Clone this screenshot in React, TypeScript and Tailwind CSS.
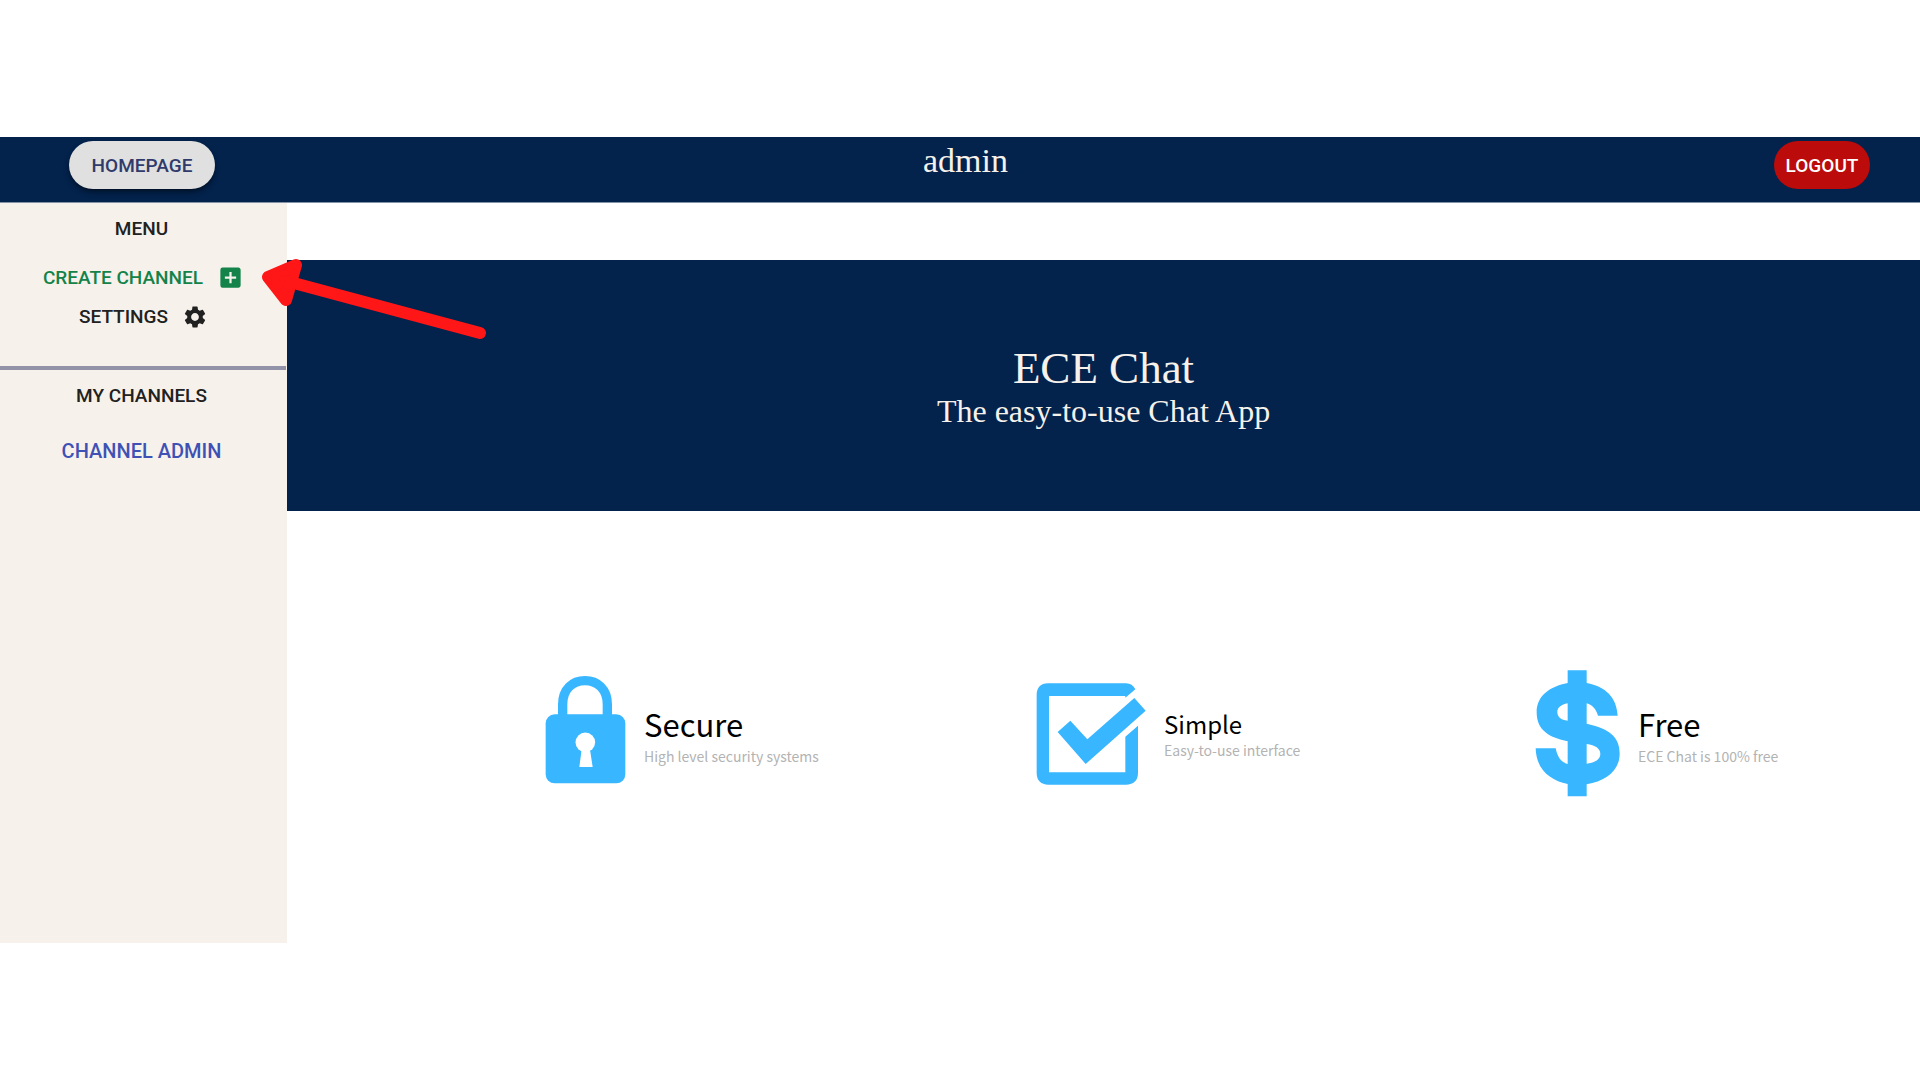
import type { ReactNode } from "react";
import { MdAddBox, MdSettings } from "react-icons/md";

const accent = "#38b6ff";

function LockIcon() {
  return (
    <svg viewBox="75 45 243 348" className="h-[116px] w-[81px] shrink-0" aria-hidden="true">
      <path d="M128 165V130C128 84 158 59 195 59S262 84 262 130V165" fill="none" stroke={accent} strokeWidth="28" />
      <rect x="77" y="160" width="239" height="207" rx="27" fill={accent} />
      <circle cx="196" cy="244" r="29.5" fill="#fff" />
      <path d="M185 262H208L211 272L218 318H178L184 272Z" fill="#fff" />
    </svg>
  );
}

function CheckIcon() {
  return (
    <svg viewBox="48 66 330 306" className="h-[102px] w-[110px] shrink-0" aria-hidden="true">
      <path
        d="M346 85C340 73 331 67 318 67H84C62 67 50 80 50 102V336C50 358 63 371 85 371H318C341 371 354 358 354 336V194L316 227V334H87V105H316V110Z"
        fill={accent}
      />
      <path d="M113 213L151 179L202 235L343 111L377 149L197 309Z" fill={accent} />
    </svg>
  );
}

function DollarIcon() {
  return (
    <svg viewBox="46 34 255 381" className="h-[127px] w-[85px] shrink-0" aria-hidden="true">
      <path
        fillRule="evenodd"
        fill={accent}
        d="M144 35H201V73C258 84 291 116 294 171H235C229 152 219 139 201 134V195C266 210 300 232 300 285C300 336 258 367 201 377V413H144V376C91 365 50 333 48 269H108C113 295 124 311 144 316V248C91 237 51 217 51 161C51 111 91 83 144 73ZM144 134C124 138 113 147 113 160C113 175 124 184 144 186ZM201 256V315C227 312 242 301 242 285C242 270 227 259 201 256Z"
      />
    </svg>
  );
}

function Feature({ icon, title, text, small = false }: { icon: ReactNode; title: string; text: string; small?: boolean }) {
  return (
    <article className="flex items-center gap-[18px] whitespace-nowrap font-['Noto_Sans_CJK_SC','Noto_Sans',sans-serif]">
      {icon}
      {small ? (
        <div className="pt-1">
          <h3 className="text-[24px] leading-7 text-black">{title}</h3>
          <p className="text-[14px] leading-6 text-[#b3b3b3]">{text}</p>
        </div>
      ) : (
        <div className="pt-2">
          <h3 className="text-[31px] leading-9 text-black">{title}</h3>
          <p className="text-[14px] leading-7 text-[#b3b3b3]">{text}</p>
        </div>
      )}
    </article>
  );
}

export default function App() {
  return (
    <div className="min-h-screen bg-white py-[137px] font-[Roboto,sans-serif] text-[#212121]">
      <header className="grid h-[66px] grid-cols-[287px_1fr_auto] items-start border-b border-[#8492a8] bg-[#03224c] pr-[50px] pt-1">
        <button className="ml-[69px] h-12 w-[146px] rounded-full bg-[#e0e0e0] pt-0.5 text-[19px] font-medium text-[#303b6b] shadow-md shadow-black/40">
          HOMEPAGE
        </button>
        <p className="pr-[130px] text-center font-['Liberation_Serif',serif] text-[34px] leading-10 text-[#f6f1eb]">admin</p>
        <button className="h-12 w-24 rounded-full bg-[#bb0b0b] pt-0.5 text-[19px] font-medium text-white">LOGOUT</button>
      </header>

      <div className="relative flex min-h-[740px]">
        <aside className="w-[287px] shrink-0 bg-[#f6f1eb] text-[19px] font-medium leading-6">
          <nav className="flex flex-col items-center pr-1 pt-[14px]">
            <h2>MENU</h2>
            <a href="#create" className="mt-[23px] flex items-center gap-[14px] pl-1 text-[#13834a]">
              CREATE CHANNEL
              <MdAddBox size={27} aria-hidden="true" />
            </a>
            <a href="#settings" className="mt-[13px] flex items-center gap-[14px] pl-1 text-[#212121]">
              SETTINGS
              <MdSettings size={26} aria-hidden="true" />
            </a>
          </nav>
          <hr className="mr-px mt-9 border-t-4 border-[#9292a8]" />
          <nav className="flex flex-col items-center pr-1 pt-[14px]">
            <h2>MY CHANNELS</h2>
            <a href="#admin" className="mt-[31px] text-[20px] text-[#3f51b5]">
              CHANNEL ADMIN
            </a>
          </nav>
        </aside>

        <main className="flex min-w-0 grow flex-col pt-[57px] font-['Liberation_Serif',serif]">
          <section className="flex h-[251px] flex-col items-center justify-center bg-[#03224c] text-[#f6f1eb]">
            <h1 className="text-[45px] leading-[50px]">ECE Chat</h1>
            <p className="text-[32px] leading-9">The easy-to-use Chat App</p>
          </section>
          <section className="grid grow grid-cols-[491fr_499fr_246fr] items-center pl-[258px] pr-[139px] pt-[13px]">
            <Feature icon={<LockIcon />} title="Secure" text="High level security systems" />
            <Feature icon={<CheckIcon />} title="Simple" text="Easy-to-use interface" small />
            <Feature icon={<DollarIcon />} title="Free" text="ECE Chat is 100% free" />
          </section>
        </main>

        <svg viewBox="261 258 225 82" className="absolute left-[261px] top-[55px] h-[82px] w-[225px]" aria-hidden="true">
          <path d="M480 333L290 282" stroke="#ff1616" strokeWidth="12" strokeLinecap="round" />
          <path d="M268 277L296 265L286 300Z" fill="#ff1616" stroke="#ff1616" strokeWidth="12" strokeLinejoin="round" />
        </svg>
      </div>
    </div>
  );
}
